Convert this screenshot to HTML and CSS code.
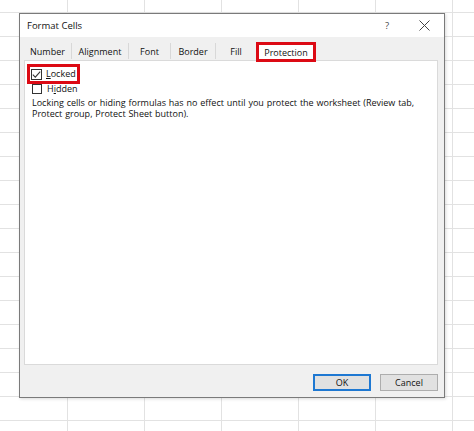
FILE: index.html
```html
<!DOCTYPE html>
<html>
<head>
<meta charset="utf-8">
<link rel="stylesheet" href="styles.css">
</head>
<body>
<div class="sheet"></div>
<div class="dialog">
  <div class="titlebar">
    <span class="title">Format Cells</span>
    <span class="help">?</span>
    <svg class="close" width="11" height="11" viewBox="0 0 11 11"><path d="M0.5 0.5L10.5 10.5M10.5 0.5L0.5 10.5" stroke="#444" stroke-width="1" fill="none"/></svg>
  </div>
  <div class="body">
    <div class="tabs">
      <div class="tab t1">Number</div>
      <div class="tab t2">Alignment</div>
      <div class="tab t3">Font</div>
      <div class="tab t4">Border</div>
      <div class="tab t5">Fill</div>
      <div class="tab sel">Protection</div>
    </div>
    <div class="panel">
      <div class="row locked">
        <span class="box checked"><svg width="9" height="9" viewBox="0 0 9 9"><path d="M0.8 4.6L3.3 7.1L8.2 1.6" stroke="#333" stroke-width="1.1" fill="none"/></svg></span>
        <span class="lbl"><u>L</u>ocked</span>
      </div>
      <div class="row hidden">
        <span class="box"></span>
        <span class="lbl">H<u>i</u>dden</span>
      </div>
      <p class="note">Locking cells or hiding formulas has no effect until you protect the worksheet (Review tab, Protect group, Protect Sheet button).</p>
    </div>
    <div class="buttons">
      <button class="btn ok">OK</button>
      <button class="btn">Cancel</button>
    </div>
  </div>
</div>
</body>
</html>
```
FILE: styles.css
```css
html, body {
  margin: 0;
  padding: 0;
}
body {
  width: 474px;
  height: 431px;
  position: relative;
  overflow: hidden;
  background: #fff;
  font-family: "Open Sans", "Noto Sans", sans-serif;
  color: #111;
}
.sheet {
  position: absolute;
  inset: 0;
  background-image:
    repeating-linear-gradient(to right, transparent 0, transparent 67px, #e2e2e2 67px, #e2e2e2 68px, transparent 68px, transparent 77px),
    repeating-linear-gradient(to bottom, transparent 0, transparent 12px, #e2e2e2 12px, #e2e2e2 13px, transparent 13px, transparent 24px);
}
.dialog {
  position: absolute;
  left: 19px;
  top: 13px;
  width: 424px;
  height: 383px;
  border: 1px solid #7a7a7a;
  background: #f0f0f0;
  display: flex;
  flex-direction: column;
  box-shadow: 1px 1px 3px rgba(0,0,0,0.15);
}
.titlebar {
  height: 23px;
  flex: none;
  background: #fff;
  display: flex;
  align-items: center;
  padding-left: 7px;
  font-size: 9.5px;
}
.title {
  flex: 1;
  color: #111;
}
.help {
  font-size: 9.5px;
  color: #444;
  margin-right: 30px;
}
.close {
  margin-right: 14px;
}
.body {
  flex: 1;
  display: flex;
  flex-direction: column;
  padding: 0 6px 0 4px;
  font-size: 9px;
}
.tabs {
  display: flex;
  height: 23px;
  flex: none;
  align-items: flex-end;
  position: relative;
  z-index: 2;
}
.tab {
  box-sizing: border-box;
  height: 16px;
  margin-bottom: 1px;
  display: flex;
  align-items: center;
  justify-content: center;
  border-right: 1px solid #d8d8d8;
  color: #111;
}
.t1 { width: 48px; }
.t2 { width: 57px; }
.t3 { width: 42px; }
.t4 { width: 45px; }
.t5 { width: 40px; border-right: none; }
.tab.sel {
  width: 60px;
  height: 20px;
  background: #fff;
  margin-bottom: -2px;
  border: 3px solid #dc0a14;
}
.panel {
  box-sizing: border-box;
  height: 305px;
  flex: none;
  background: #fff;
  border: 1px solid #dadada;
  padding: 3px 0 0 2px;
}
.row {
  display: flex;
  align-items: center;
}
.locked {
  box-sizing: border-box;
  width: 53px;
  height: 20px;
  border: 3px solid #dc0a14;
  padding-left: 1px;
}
.hidden {
  padding-left: 5px;
  height: 12px;
  align-items: flex-start;
}
.box {
  box-sizing: border-box;
  width: 11px;
  height: 11px;
  border: 1px solid #333;
  background: #fff;
  display: inline-flex;
  align-items: center;
  justify-content: center;
  margin-right: 4px;
  flex: none;
}
.hidden .box {
  width: 10px;
  height: 10px;
  margin-right: 5px;
}
.hidden .lbl {
  line-height: 10px;
}
.box svg {
  display: block;
}
.locked .lbl {
  line-height: 12px;
  white-space: nowrap;
}
.note {
  margin: 1px 0 0 5px;
  line-height: 11px;
  width: 400px;
  word-spacing: 0.5px;
}
.buttons {
  display: flex;
  justify-content: flex-end;
  gap: 9px;
  padding-top: 9px;
}
.btn {
  box-sizing: border-box;
  width: 58px;
  height: 17px;
  background: #e1e1e1;
  border: 1px solid #adadad;
  font-family: "Open Sans", "Noto Sans", sans-serif;
  font-size: 9px;
  color: #111;
  padding: 0;
  margin: 0;
}
.btn.ok {
  border: 2px solid #1e78d2;
}
```
